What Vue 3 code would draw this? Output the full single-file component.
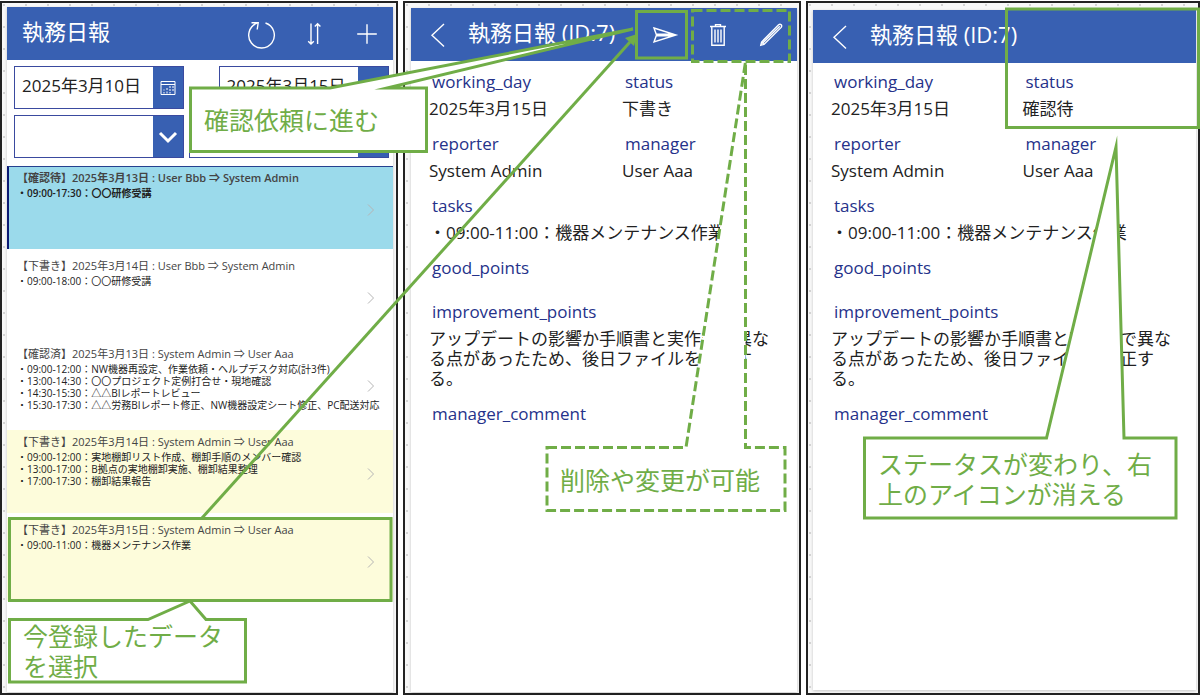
<script setup>
// ! import all
import { ref } from 'vue';

// ! define params
const params = {
	dateFrom: ref('2025年3月10日'),
	dateTo: ref('2025年3月15日'),
	reports: [
		{
			id: 1,
			theme: 'selected',
			title: '【確認待】2025年3月13日 : User Bbb ⇒ System Admin',
			tasks: ['・09:00-17:30：〇〇研修受講'],
		},
		{
			id: 2,
			theme: 'plain',
			title: '【下書き】2025年3月14日 : User Bbb ⇒ System Admin',
			tasks: ['・09:00-18:00：〇〇研修受講'],
		},
		{
			id: 3,
			theme: 'plain',
			title: '【確認済】2025年3月13日 : System Admin ⇒ User Aaa',
			tasks: [
				'・09:00-12:00：NW機器再設定、作業依頼・ヘルプデスク対応(計3件)',
				'・13:00-14:30：〇〇プロジェクト定例打合せ・現地確認',
				'・14:30-15:30：△△BIレポートレビュー',
				'・15:30-17:30：△△労務BIレポート修正、NW機器設定シート修正、PC配送対応',
			],
		},
		{
			id: 4,
			theme: 'draft',
			title: '【下書き】2025年3月14日 : System Admin ⇒ User Aaa',
			tasks: [
				'・09:00-12:00：実地棚卸リスト作成、棚卸手順のメンバー確認',
				'・13:00-17:00：B拠点の実地棚卸実施、棚卸結果整理',
				'・17:00-17:30：棚卸結果報告',
			],
		},
		{
			id: 5,
			theme: 'draft',
			title: '【下書き】2025年3月15日 : System Admin ⇒ User Aaa',
			tasks: ['・09:00-11:00：機器メンテナンス作業'],
		},
	],
	details: [
		{ id: 'draft', frame: 'frame-middle', status: '下書き', editable: true },
		{ id: 'waiting', frame: 'frame-right', status: '確認待', editable: false },
	],
	// positions on the 1200 x 696 annotation canvas
	notes: [
		{ x: 204, y: 104, text: '確認依頼に進む' },
		{ x: 560, y: 464, text: '削除や変更が可能' },
		{ x: 878, y: 448, text: 'ステータスが変わり、右\n上のアイコンが消える' },
		{ x: 23, y: 620, text: '今登録したデータ\nを選択' },
	],
}

// ! define methods
const methods = {
	fieldsOf: (detail) => [
		{ label: 'working_day', value: '2025年3月15日' },
		{ label: 'status', value: detail.status },
		{ label: 'reporter', value: 'System Admin' },
		{ label: 'manager', value: 'User Aaa' },
		{ label: 'tasks', value: '・09:00-11:00：機器メンテナンス作業', wide: true },
		{ label: 'good_points', value: '', wide: true },
		{
			label: 'improvement_points',
			value: 'アップデートの影響か手順書と実作業で異なる点があったため、後日ファイルを修正する。',
			wide: true,
		},
		{ label: 'manager_comment', value: '', wide: true },
	],
	notePlace: (note) => ({
		left: `${(note.x / 1200) * 100}%`,
		top: `${(note.y / 696) * 100}%`,
	}),
}
</script>

<template>
	<main class="board">
		<section class="frame frame-left">
			<div class="screen">
				<header class="bar">
					<h1 class="bar-title bar-title-first">執務日報</h1>
					<button class="bar-button" type="button" aria-label="更新">
						<svg class="icon" viewBox="0 0 30 30">
							<path d="M19.5 4A12.8 12.8 0 1 1 11 4.2M5.5 3.8H12.2L11.2 10.5" />
						</svg>
					</button>
					<button class="bar-button" type="button" aria-label="並べ替え">
						<svg class="icon" viewBox="0 0 30 30">
							<path d="M12 4.5V25M9.2 22.2L12 25L14.8 22.2M18.6 25V4.8M15.8 7.6L18.6 4.8L21.4 7.6" />
						</svg>
					</button>
					<button class="bar-button" type="button" aria-label="追加">
						<svg class="icon" viewBox="0 0 30 30">
							<path d="M15 5.2V24.8M5.2 15H24.8" />
						</svg>
					</button>
				</header>

				<div class="filters">
					<div class="filter-row">
						<div class="picker">
							<input v-model="params.dateFrom.value" class="picker-input" type="text" aria-label="開始日" />
							<button class="picker-button" type="button" aria-label="開始日を選ぶ">
								<svg class="calendar" viewBox="0 0 16 16">
									<path d="M1 1.5H15V14.5H1ZM1 4.5H15" />
									<path d="M10 6V8M13 6V8M10 9V11M13 9V11M7 8V10M4 9.5V10.5M4 12V13.5M7 11.5V13.5M10 12V13.5" />
								</svg>
							</button>
						</div>
						<span class="dash">-</span>
						<div class="picker">
							<input v-model="params.dateTo.value" class="picker-input" type="text" aria-label="終了日" />
							<button class="picker-button" type="button" aria-label="終了日を選ぶ">
								<svg class="calendar" viewBox="0 0 16 16">
									<path d="M1 1.5H15V14.5H1ZM1 4.5H15" />
									<path d="M10 6V8M13 6V8M10 9V11M13 9V11M7 8V10M4 9.5V10.5M4 12V13.5M7 11.5V13.5M10 12V13.5" />
								</svg>
							</button>
						</div>
					</div>
					<div class="filter-row filter-row-select">
						<div v-for="name in ['ステータス', '報告者']" :key="name" class="combo">
							<select class="combo-select" :aria-label="name">
								<option value=""></option>
							</select>
							<span class="combo-arrow">
								<svg class="combo-icon" viewBox="0 0 20 14">
									<path d="M2 3L10 11L18 3" />
								</svg>
							</span>
						</div>
					</div>
				</div>

				<ul class="reports">
					<li v-for="report in params.reports" :key="report.id" class="report" :class="report.theme">
						<div class="report-text">
							<h2 class="report-title">{{ report.title }}</h2>
							<p v-for="task in report.tasks" :key="task" class="report-task">{{ task }}</p>
						</div>
						<button class="report-open" type="button" aria-label="開く">
							<svg class="report-chevron" viewBox="0 0 8 14">
								<path d="M1 1.5L6.5 7L1 12.5" />
							</svg>
						</button>
					</li>
				</ul>
			</div>
		</section>

		<section v-for="detail in params.details" :key="detail.id" class="frame" :class="detail.frame">
			<div class="screen">
				<header class="bar">
					<button class="bar-button" type="button" aria-label="戻る">
						<svg class="icon" viewBox="0 0 30 30">
							<path d="M21 4L9 15.3L21 26.5" />
						</svg>
					</button>
					<h1 class="bar-title">執務日報 (ID:7)</h1>
					<template v-if="detail.editable">
						<button class="bar-button" type="button" aria-label="送信">
							<svg class="icon" viewBox="0 0 30 30">
								<path d="M4 8L26 15L4 22L6.5 15ZM6.5 14.3H24M6.5 15.7H24" />
							</svg>
						</button>
						<button class="bar-button" type="button" aria-label="削除">
							<svg class="icon" viewBox="0 0 30 30">
								<path d="M7 6.5H23M12.5 6.5V4.6H17.5V6.5M8.8 6.5V25.3H21.2V6.5M12 9.5V22.5M15 9.5V22.5M18 9.5V22.5" />
							</svg>
						</button>
						<button class="bar-button" type="button" aria-label="編集">
							<svg class="icon" viewBox="0 0 30 30">
								<path d="M4.8 25.2L5.6 22L22.6 4.8Q24 3.8 25.2 4.8Q26.2 6 25.2 7.4L8 24.4ZM5.6 22L8 24.4M7 22.8L23.8 6.2" />
							</svg>
						</button>
					</template>
				</header>

				<dl class="fields">
					<div
						v-for="field in methods.fieldsOf(detail)"
						:key="field.label"
						class="field"
						:class="{ wide: field.wide }"
					>
						<dt class="field-label">{{ field.label }}</dt>
						<dd class="field-value">{{ field.value }}</dd>
					</div>
				</dl>
			</div>
		</section>

		<!-- callouts and markers over the three screens -->
		<div class="overlay">
			<svg class="marks" viewBox="0 0 1200 696" preserveAspectRatio="none">
				<path class="filled" d="M190.5 88H330L633 29L387 88H426.5V151.5H190.5Z" />
				<path d="M202 518L630 42" />
				<path class="head" d="M637 34L634 46L625 38Z" />
				<path d="M636.5 11.5H686.5V58H636.5Z" />
				<path class="dashed" d="M692.5 10.5H789.5V61.5H692.5Z" />
				<path class="filled dashed" d="M547 447.5H686L745.5 62V447.5H785V510.5H547Z" />
				<path d="M1006.5 9H1198.5V127.5H1006.5Z" />
				<path class="filled" d="M864.5 438H1046.5L1116 147L1124 438H1176V518H864.5Z" />
				<path d="M9.5 518.5H391V600.5H9.5Z" />
				<path class="filled" d="M9.5 619.5H148L190 601L206 619.5H245.5V682H9.5Z" />
			</svg>
			<p v-for="note in params.notes" :key="note.text" class="note" :style="methods.notePlace(note)">{{ note.text }}</p>
		</div>
	</main>
</template>

<style>
body {
	margin: 0;
	background: #fff;
}
</style>

<style scoped>
.board {
	position: relative;
	display: grid;
	grid-template-columns: minmax(0, 398fr) minmax(0, 398fr) minmax(0, 394fr);
	gap: 5px;
	box-sizing: border-box;
	min-height: 100vh;
	padding: 1px 0;
	font-family: "Open Sans", "Noto Sans CJK JP", sans-serif;
	color: #222;
}

.frame {
	display: flex;
	box-sizing: border-box;
	border: 2px solid #222;
	background-color: #f8f8f8;
	background-image: radial-gradient(circle at 2px 2px, #d4d4d4 1px, transparent 1px);
	background-size: 22px 22px;
}

.frame-left {
	padding: 4px 3px 1px 5px;
}

.frame-middle {
	padding: 5px 2px 1px 6px;
}

.frame-right {
	padding: 7px 2px 3px 5px;
}

.screen {
	flex: 1;
	min-width: 0;
	background: #fff;
	box-shadow: 0 1px 3px rgba(0, 0, 0, 0.2);
}

button,
input,
select {
	margin: 0;
	padding: 0;
	border: 0;
	border-radius: 0;
	background: none;
	font: inherit;
	color: inherit;
}

svg {
	display: block;
	fill: none;
	stroke: currentColor;
}

.bar {
	display: flex;
	align-items: center;
	height: 53px;
	background: #3860b2;
	color: #fff;
}

.bar-title {
	flex: 1;
	margin: 0;
	padding: 0 0 5px 4px;
	font-size: 22px;
	line-height: 30px;
	font-weight: 400;
	white-space: nowrap;
}

.bar-title-first {
	padding-left: 15px;
}

.bar-button {
	display: flex;
	justify-content: center;
	width: 53px;
}

.icon {
	width: 30px;
	height: 30px;
	stroke-width: 1.4;
}

.filters {
	display: grid;
	gap: 6px;
	padding: 6px 4px 8px 7px;
}

.filter-row {
	display: grid;
	grid-template-columns: minmax(0, 5fr) minmax(0, 1fr) minmax(0, 5fr);
}

.filter-row-select {
	grid-template-columns: minmax(0, 170fr) minmax(0, 200fr);
	gap: 5px;
}

.picker,
.combo {
	box-sizing: border-box;
	height: 43px;
	border: 1px solid #3a4a9f;
}

.picker {
	display: flex;
}

.picker-input {
	flex: 1;
	min-width: 0;
	padding: 0 0 7px 7px;
	font-size: 17px;
}

.picker-button {
	display: flex;
	justify-content: center;
	align-items: center;
	width: 30px;
	background: #3860b2;
	color: #fff;
}

.calendar {
	width: 16px;
	height: 16px;
}

.dash {
	align-self: center;
	padding-left: 12px;
	font-size: 17px;
	line-height: 24px;
}

.combo {
	display: grid;
	grid-template-columns: 1fr 30px;
}

.combo-select {
	grid-area: 1 / 1 / 2 / 3;
	width: 100%;
	appearance: none;
}

.combo-arrow {
	grid-area: 1 / 2 / 2 / 3;
	display: flex;
	justify-content: center;
	align-items: center;
	background: #3860b2;
	color: #fff;
	pointer-events: none;
}

.combo-icon {
	width: 20px;
	height: 14px;
	stroke-width: 3;
}

.reports {
	display: grid;
	gap: 5px;
	margin: 0;
	padding: 0;
	list-style: none;
}

.report {
	display: flex;
	box-sizing: border-box;
	min-width: 0;
	height: 83px;
	padding: 4px 18px 0 10px;
}

.report-text {
	flex: 1;
	min-width: 0;
}

.report-title {
	margin: 0 0 1px;
	font-size: 11px;
	line-height: 16px;
	font-weight: 400;
	color: #444;
	white-space: nowrap;
}

.report-task {
	margin: 0;
	font-size: 10px;
	line-height: 12px;
	white-space: nowrap;
}

.report-open {
	align-self: center;
	color: #b5b5b5;
}

.report-chevron {
	width: 8px;
	height: 14px;
}

.selected {
	padding: 3px 18px 0 8px;
	border-top: 1px solid #26418f;
	border-left: 2px solid #0b1a75;
	background: #9bdaeb;
}

.selected .report-title,
.selected .report-task {
	font-weight: 600;
}

.draft {
	background: #fdfcdb;
}

.fields {
	display: grid;
	grid-template-columns: minmax(0, 1fr) minmax(0, 1fr);
	margin: 0;
	padding-top: 9px;
}

.frame-right .fields {
	padding-top: 7px;
}

.field {
	padding: 0 16px 13px 18px;
}

.wide {
	grid-column: 1 / 3;
}

.field-label {
	padding-left: 3px;
	font-size: 17px;
	line-height: 24px;
	color: #25328a;
}

.field-value {
	min-height: 2px;
	margin: 5px 0 0;
	font-size: 17px;
	line-height: 20px;
}

.overlay {
	position: absolute;
	inset: 0;
	pointer-events: none;
}

.marks {
	width: 100%;
	height: 100%;
	stroke: #70ad47;
	stroke-width: 3;
	stroke-miterlimit: 10;
}

.marks path {
	vector-effect: non-scaling-stroke;
}

.marks .filled {
	fill: #fff;
}

.marks .dashed {
	stroke-dasharray: 10 4;
}

.marks .head {
	fill: #70ad47;
	stroke: none;
}

.note {
	position: absolute;
	margin: 0;
	font-family: "Noto Sans CJK JP", sans-serif;
	font-size: 25px;
	line-height: 30px;
	font-weight: 400;
	color: #70ad47;
	white-space: pre;
}
</style>
